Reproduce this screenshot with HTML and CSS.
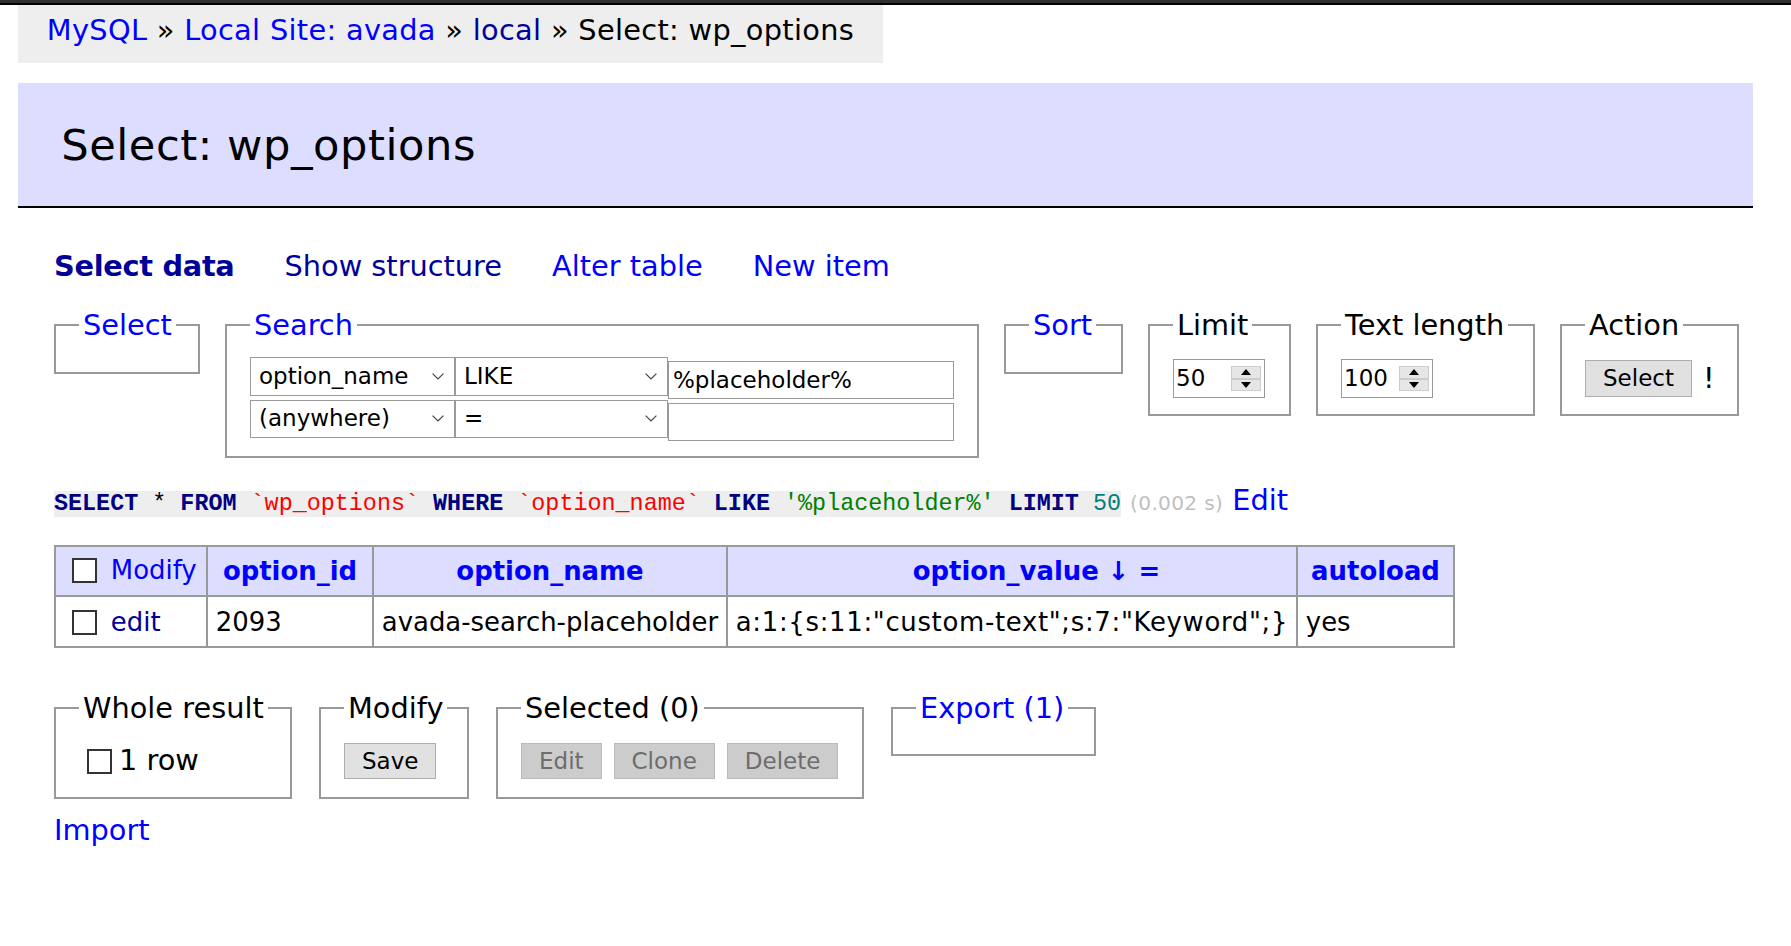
FILE: index.html
```html
<!DOCTYPE html>
<html lang="en">
<head>
<meta charset="utf-8">
<title>Select: wp_options - Adminer</title>
<link rel="stylesheet" href="styles.css">
</head>
<body>
<div class="topbar"></div>
<p class="breadcrumb"><a href="#">MySQL</a> » <a href="#">Local Site: avada</a> » <a href="#" class="visited">local</a> » Select: wp_options</p>
<h2 class="title">Select: wp_options</h2>
<div class="content">
  <p class="links">
    <a href="#" class="visited active">Select data</a>
    <a href="#" class="visited">Show structure</a>
    <a href="#">Alter table</a>
    <a href="#">New item</a>
  </p>

  <form class="filters">
    <fieldset class="fs fs-select"><legend><a href="#">Select</a></legend></fieldset>

    <fieldset class="fs fs-search"><legend><a href="#">Search</a></legend>
      <div class="srow">
        <span class="sel sel-col"><span>option_name</span><svg class="chev" width="12" height="7" viewBox="0 0 12 7"><path d="M0.6 0.6 L6 6 L11.4 0.6" fill="none" stroke="#444" stroke-width="1.2"/></svg></span>
        <span class="sel sel-op"><span>LIKE</span><svg class="chev" width="12" height="7" viewBox="0 0 12 7"><path d="M0.6 0.6 L6 6 L11.4 0.6" fill="none" stroke="#444" stroke-width="1.2"/></svg></span>
        <input class="txt" type="text" value="%placeholder%">
      </div>
      <div class="srow">
        <span class="sel sel-col"><span>(anywhere)</span><svg class="chev" width="12" height="7" viewBox="0 0 12 7"><path d="M0.6 0.6 L6 6 L11.4 0.6" fill="none" stroke="#444" stroke-width="1.2"/></svg></span>
        <span class="sel sel-op"><span>=</span><svg class="chev" width="12" height="7" viewBox="0 0 12 7"><path d="M0.6 0.6 L6 6 L11.4 0.6" fill="none" stroke="#444" stroke-width="1.2"/></svg></span>
        <input class="txt" type="text" value="">
      </div>
    </fieldset>

    <fieldset class="fs fs-sort"><legend><a href="#">Sort</a></legend></fieldset>

    <fieldset class="fs fs-limit"><legend>Limit</legend>
      <div class="crow">
        <span class="numbox"><span class="numval">50</span><span class="spin"><span class="spin-up"><svg width="10" height="6" viewBox="0 0 10 6"><path d="M0 6 L5 0 L10 6 Z" fill="#000"/></svg></span><span class="spin-down"><svg width="10" height="6" viewBox="0 0 10 6"><path d="M0 0 L5 6 L10 0 Z" fill="#000"/></svg></span></span></span>
      </div>
    </fieldset>

    <fieldset class="fs fs-textlen"><legend>Text length</legend>
      <div class="crow">
        <span class="numbox"><span class="numval">100</span><span class="spin"><span class="spin-up"><svg width="10" height="6" viewBox="0 0 10 6"><path d="M0 6 L5 0 L10 6 Z" fill="#000"/></svg></span><span class="spin-down"><svg width="10" height="6" viewBox="0 0 10 6"><path d="M0 0 L5 6 L10 0 Z" fill="#000"/></svg></span></span></span>
      </div>
    </fieldset>

    <fieldset class="fs fs-action"><legend>Action</legend>
      <div class="crow">
        <button type="button" class="btn">Select</button>
        <span class="bang" title="Full table scan">!</span>
      </div>
    </fieldset>
  </form>

  <p class="sqlp"><code class="sql"><span class="kw">SELECT</span> * <span class="kw">FROM</span> <span class="bac">`wp_options`</span> <span class="kw">WHERE</span> <span class="bac">`option_name`</span> <span class="kw">LIKE</span> <span class="quo">'%placeholder%'</span> <span class="kw">LIMIT</span> <span class="num">50</span></code> <span class="time">(0.002 s)</span> <a href="#">Edit</a></p>

  <table class="data">
    <colgroup>
      <col class="c1"><col class="c2"><col class="c3"><col class="c4"><col class="c5">
    </colgroup>
    <thead>
      <tr>
        <td><span class="cellflex"><input type="checkbox" class="cb cb-cell"><a href="#">Modify</a></span></td>
        <th><a href="#">option_id</a></th>
        <th><a href="#">option_name</a></th>
        <th class="th-sorted"><a href="#">option_value</a> <a href="#" class="arrow">↓</a> <a href="#">=</a></th>
        <th><a href="#">autoload</a></th>
      </tr>
    </thead>
    <tbody>
      <tr>
        <td><span class="cellflex"><input type="checkbox" class="cb cb-cell"><a href="#" class="visited">edit</a></span></td>
        <td>2093</td>
        <td>avada-search-placeholder</td>
        <td class="serial">a:1:{s:11:"custom-text";s:7:"Keyword";}</td>
        <td>yes</td>
      </tr>
    </tbody>
  </table>

  <div class="footer-fs">
    <fieldset class="fs fs-whole"><legend>Whole result</legend>
      <div class="crow"><label class="cblabel"><input type="checkbox" class="cb">1 row</label></div>
    </fieldset>
    <fieldset class="fs fs-modify"><legend>Modify</legend>
      <div class="crow"><button type="button" class="btn">Save</button></div>
    </fieldset>
    <fieldset class="fs fs-selected"><legend>Selected (0)</legend>
      <div class="crow btns">
        <button type="button" class="btn" disabled>Edit</button>
        <button type="button" class="btn" disabled>Clone</button>
        <button type="button" class="btn" disabled>Delete</button>
      </div>
    </fieldset>
    <fieldset class="fs fs-export"><legend><a href="#">Export (1)</a></legend></fieldset>
  </div>

  <p class="import"><a href="#">Import</a></p>
</div>
</body>
</html>
```

FILE: styles.css
```css
html, body {
  margin: 0;
  padding: 0;
  background: #fff;
}
body {
  font-family: "DejaVu Sans", Verdana, sans-serif;
  font-size: 28.8px;
  line-height: 1.25;
  color: #000;
}
a {
  color: #00f;
  text-decoration: none;
}
a.visited {
  color: #009;
}

.topbar {
  height: 3px;
  background: #2f2f2f;
  border-bottom: 2px solid #000;
}

.breadcrumb {
  margin: 0 0 0 18px;
  width: 865px;
  box-sizing: border-box;
  height: 57.6px;
  line-height: 51.84px;
  padding: 0 28.8px;
  background: #eee;
  white-space: nowrap;
  letter-spacing: 0.32px;
}

.title {
  margin: 20.4px 38px 40px 18px;
  padding: 34.56px 43.2px;
  font-size: 43.2px;
  line-height: 54px;
  font-weight: normal;
  background: #ddf;
  border-bottom: 2px solid #000;
  letter-spacing: 0.55px;
}

.content {
  margin-left: 54px;
}

.links {
  margin: 0;
  display: flex;
  gap: 50px;
  line-height: 36px;
}
.links .active {
  font-weight: bold;
  letter-spacing: -0.3px;
}

.filters {
  display: flex;
  gap: 25px;
  align-items: flex-start;
  margin: 23px 0 0;
}

.fs {
  margin: 0;
  padding: 14.4px 23px;
  border: 2px solid #999;
  box-sizing: border-box;
  min-width: 0;
  min-inline-size: 0;
}
.fs legend {
  padding: 0 4px;
  line-height: 36px;
  white-space: nowrap;
}

.fs-select { width: 146px; }
.fs-search { width: 754px; }
.fs-sort { width: 119px; }
.fs-limit { width: 143px; }
.fs-textlen { width: 219px; }
.fs-action { width: 179px; }

.srow {
  display: flex;
  align-items: flex-start;
  height: 42.1px;
}

.sel {
  box-sizing: border-box;
  height: 38.4px;
  border: 1px solid #9a9a9a;
  display: flex;
  align-items: center;
  justify-content: space-between;
  padding: 0 10px 0 8px;
  font-size: 23px;
  background: #fff;
}
.sel-col { width: 205px; }
.sel-op { width: 213px; }
.chev { display: block; }

.txt {
  box-sizing: border-box;
  width: 286px;
  height: 38.3px;
  margin: 3.4px 0 0;
  border: 1px solid #9a9a9a;
  padding: 0 4px;
  font-family: "DejaVu Sans", Verdana, sans-serif;
  font-size: 23px;
  color: #000;
  background: #fff;
  outline: none;
}

.crow {
  display: flex;
  align-items: center;
  height: 42.2px;
}

.numbox {
  box-sizing: border-box;
  width: 92px;
  height: 39px;
  border: 1px solid #9a9a9a;
  display: flex;
  align-items: center;
  padding: 0 3px 0 2px;
  font-size: 23px;
}
.numval {
  flex: 1;
}
.spin {
  box-sizing: border-box;
  width: 30px;
  height: 25px;
  display: flex;
  flex-direction: column;
  border: 1px solid #cdcdcd;
  background: #e6e6e6;
}
.spin-up, .spin-down {
  flex: 1;
  display: flex;
  align-items: center;
  justify-content: center;
}
.spin-up {
  border-bottom: 2px solid #cdcdcd;
}
.spin svg { display: block; }

.btn {
  box-sizing: border-box;
  height: 37px;
  padding: 0 17px;
  margin: 0;
  border: 1px solid #adadad;
  background: #e1e1e1;
  color: #000;
  font-family: "DejaVu Sans", Verdana, sans-serif;
  font-size: 23px;
  line-height: 1;
}
.btn:disabled {
  background: #cccccc;
  border-color: #bababa;
  color: #6d6d6d;
}
.fs-modify .btn { height: 36px; }
.btns { gap: 12px; }
.btns .btn { height: 36px; }

.bang {
  margin-left: 11px;
}

.sqlp {
  margin: 23.5px 0 0;
  line-height: 36px;
}
.sql {
  font-family: "Liberation Mono", "Courier New", monospace;
  font-size: 23.4px;
  line-height: 1.2;
  background: #eee;
}
.kw { color: #000080; font-weight: bold; }
.bac { color: #f00; }
.quo { color: #008000; }
.num { color: #007f7f; }
.time {
  color: silver;
  font-size: 20.16px;
  letter-spacing: 0.3px;
}

.data {
  margin-top: 24px;
  border-collapse: collapse;
  table-layout: fixed;
  width: 1399px;
  font-size: 25.92px;
  line-height: 32.4px;
}
.data col.c1 { width: 152px; }
.data col.c2 { width: 166px; }
.data col.c3 { width: 354px; }
.data col.c4 { width: 570px; }
.data col.c5 { width: 157px; }
.data th, .data td {
  border: 2px solid #999;
  padding: 0 7.8px;
  height: 50px;
  box-sizing: border-box;
  vertical-align: middle;
  text-align: left;
  white-space: nowrap;
  overflow: hidden;
}
.data tbody td {
  height: 51px;
  padding-top: 2px;
}
.data thead th, .data thead td {
  background: #ddf;
}
.data thead th {
  text-align: center;
  padding: 1px 13px 0;
  font-weight: bold;
}
.data thead th.th-sorted {
  padding-left: 62px;
}
.data td.serial {
  letter-spacing: 0.68px;
}
.cellflex {
  display: flex;
  align-items: center;
}

.cb {
  appearance: none;
  -webkit-appearance: none;
  box-sizing: border-box;
  width: 25px;
  height: 25px;
  margin: 0;
  border: 2px solid #333;
  border-radius: 0;
  background: #fff;
  flex: none;
}
.cb-cell {
  margin: 0 14px 0 8px;
}

.footer-fs {
  display: flex;
  gap: 27px;
  align-items: flex-start;
  margin-top: 42px;
}
.fs-whole { width: 238px; }
.fs-modify { width: 150px; }
.fs-selected { width: 368px; }
.fs-export { width: 205px; }

.cblabel {
  display: flex;
  align-items: center;
  gap: 7px;
  margin-left: 8px;
}

.import {
  margin: 13px 0 0;
  line-height: 36px;
}
```
